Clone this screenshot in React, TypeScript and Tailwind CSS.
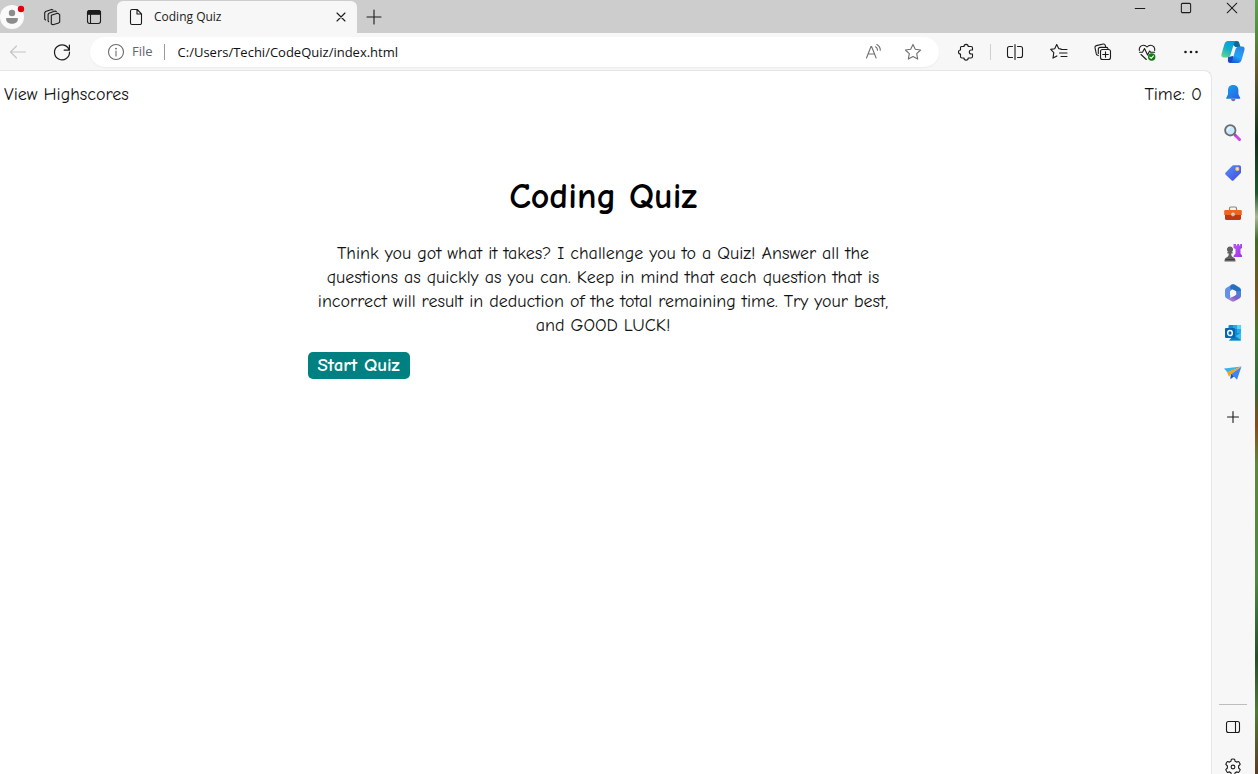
import { useState, type ReactNode } from "react";

type IconProps = { children: ReactNode; size?: number; className?: string };

function Line({ children, size = 20, className = "" }: IconProps) {
  return (
    <svg
      width={size}
      height={size}
      viewBox="0 0 20 20"
      fill="none"
      stroke="currentColor"
      strokeWidth="1.1"
      strokeLinecap="round"
      strokeLinejoin="round"
      className={className}
      aria-hidden="true"
    >
      {children}
    </svg>
  );
}

function ToolButton({ label, children, className = "w-11" }: { label: string; children: ReactNode; className?: string }) {
  return (
    <button type="button" aria-label={label} className={`flex h-full shrink-0 items-center justify-center ${className}`}>
      {children}
    </button>
  );
}

function TitleBar() {
  return (
    <header className="flex h-[33px] shrink-0 bg-[#cdcdcd]">
      <button type="button" aria-label="Profile" className="w-[32px] shrink-0">
        <svg width="25" height="33" viewBox="0 0 25 33" aria-hidden="true">
          <circle cx="12" cy="17" r="12" fill="#fafafa" />
          <circle cx="12" cy="13" r="3.2" fill="#8c8c8c" />
          <path d="M6.200 18h11.600v1.500c0 2.800-2.600 4.200-5.800 4.200s-5.800-1.400-5.800-4.200z" fill="#8c8c8c" />
          <circle cx="21" cy="9" r="3.200" fill="#e3000f" />
        </svg>
      </button>
      <ToolButton label="Workspaces" className="w-10">
        <Line>
          <path d="M9.300 8.200l6.200-2 .9.400 1.300 1.100v7.300l-1 .9-5.700 1.900-1.700-.9V8.800z" />
          <path d="M6.600 14.700l-.5-.8V7.300l.8-1 6.300-2.200 1.200.6M3.600 13l-.9-.8V5.600l.8-1L9.700 2.400l1.300.6" />
        </Line>
      </ToolButton>
      <ToolButton label="Tab actions" className="w-11">
        <Line>
          <rect x="3.500" y="3.500" width="13" height="13" rx="2.200" />
          <path d="M3.500 5.700a2.200 2.200 0 0 1 2.200-2.200h8.600a2.200 2.200 0 0 1 2.200 2.200v1.600h-13z" fill="currentColor" />
          <path d="M6.500 7v9.500" />
        </Line>
      </ToolButton>
      <div className="mt-px ml-px flex w-60 shrink-0 items-center rounded-t-md bg-[#f7f7f7] pr-[6px] pl-[9px]">
        <Line>
          <path d="M6 2.500h5.200l4.300 4.300V16a1.500 1.500 0 0 1-1.500 1.500H6A1.500 1.500 0 0 1 4.500 16V4A1.500 1.500 0 0 1 6 2.500zM11 2.700V7h4.300" />
        </Line>
        <span className="flex-1 pl-2 text-xs text-[#1b1b1b]">Coding Quiz</span>
        <button type="button" aria-label="Close tab" className="flex size-5 items-center justify-center">
          <Line>
            <path d="M6 6l8 8M14 6l-8 8" />
          </Line>
        </button>
      </div>
      <ToolButton label="New tab" className="w-[34px]">
        <Line>
          <path d="M10 3v14M3 10h14" />
        </Line>
      </ToolButton>
      <div className="ml-auto flex h-4">
        <ToolButton label="Minimize" className="w-[46px]">
          <Line size={16}>
            <path d="M4 10.500h12" strokeWidth="1.300" />
          </Line>
        </ToolButton>
        <ToolButton label="Maximize" className="w-[46px]">
          <Line size={16}>
            <rect x="4.200" y="4.200" width="11.600" height="11.600" rx="1.500" strokeWidth="1.300" />
          </Line>
        </ToolButton>
        <ToolButton label="Close window" className="w-[46px]">
          <Line size={16}>
            <path d="M4 4l12 12M16 4L4 16" strokeWidth="1.300" />
          </Line>
        </ToolButton>
      </div>
    </header>
  );
}

function Toolbar() {
  return (
    <nav className="flex h-[38px] shrink-0 items-center pr-[2px]">
      <ToolButton label="Back" className="w-9">
        <Line className="text-[#c4c4c4]">
          <path d="M17.500 10H2.500M8.500 4L2.500 10l6 6" />
        </Line>
      </ToolButton>
      <ToolButton label="Refresh" className="w-[52px]">
        <Line>
          <path d="M17.200 8.200A7.500 7.500 0 1 0 17.500 10M17.400 3v5.200h-5.200" strokeWidth="1.200" />
        </Line>
      </ToolButton>
      <form
        className="mr-[5px] ml-[2px] flex h-[30px] flex-1 items-center rounded-full bg-white px-4 shadow-xs"
        onSubmit={(e) => e.preventDefault()}
      >
        <button type="button" className="flex items-center gap-[6px] text-[13px] text-[#5f6670]">
          <Line className="text-[#6b6b6b]">
            <circle cx="10" cy="10" r="7.500" />
            <path d="M10 9v5" />
            <circle cx="10" cy="6.600" r=".4" fill="currentColor" />
          </Line>
          File
        </button>
        <span className="mr-[13px] ml-[11px] h-4 w-px bg-[#9a9a9a]" />
        <input
          type="text"
          aria-label="Address"
          defaultValue="C:/Users/Techi/CodeQuiz/index.html"
          className="min-w-0 flex-1 bg-transparent pt-px text-[13px] text-[#111] outline-none"
        />
        <button type="button" aria-label="Read aloud" className="mr-5 text-[#707070]">
          <Line>
            <path d="M3.500 16L8 4.500h.6l4.500 11.500M5.200 12h6.200M12.500 4.800c1.300.7 2 1.900 2 3.500M13.800 2.500c2.200 1.200 3.500 3.200 3.500 5.800" />
          </Line>
        </button>
        <button type="button" aria-label="Add to favorites" className="text-[#707070]">
          <Line>
            <path d="M10 2.400l2.300 4.900 5.300.7-3.900 3.700 1 5.400L10 14.500l-4.700 2.600 1-5.400L2.400 8l5.300-.7z" />
          </Line>
        </button>
      </form>
      <ToolButton label="Extensions">
        <Line>
          <path d="M5.500 4.500H8a2.100 2.100 0 0 1 4.200 0h2.800a1.500 1.500 0 0 1 1.500 1.500v2h-1.200a2 2 0 0 0 0 4h1.200v2.500a1.500 1.500 0 0 1-1.500 1.500h-2.800a2.100 2.100 0 0 1-4.200 0H6a1.500 1.500 0 0 1-1.500-1.500V12a2 2 0 0 1 0-4V5.500a1 1 0 0 1 1-1z" />
        </Line>
      </ToolButton>
      <span className="mx-[2px] h-4 w-px bg-[#cfcfcf]" />
      <ToolButton label="Split screen">
        <Line>
          <path d="M10 2.500v15M7.500 4.500h-3a2 2 0 0 0-2 2v7a2 2 0 0 0 2 2h3M12.500 4.500h3a2 2 0 0 1 2 2v7a2 2 0 0 1-2 2h-3" />
        </Line>
      </ToolButton>
      <ToolButton label="Favorites">
        <Line>
          <path d="M12.200 7L9.700 6.600 7.700 2.500 5.700 6.700l-4 .7 3.100 3.200-.8 5.500 3.900-2.200M12 7.500h6M10.500 11h7.500M12 14.500h6" />
        </Line>
      </ToolButton>
      <ToolButton label="Collections">
        <Line>
          <rect x="7.500" y="7.500" width="10" height="10" rx="2" />
          <path d="M12.500 9.700v5.600M9.700 12.500h5.600M5.300 13.600l-1.100-.5a2 2 0 0 1-.9-1.200L2 5.700a1.800 1.800 0 0 1 1.300-2.100l7-1.600a1.800 1.800 0 0 1 2 1.300l.4 1.900M5.300 11.500V7.400a2 2 0 0 1 2-2h5.900a2 2 0 0 1 1.800 1" />
        </Line>
      </ToolButton>
      <ToolButton label="Browser essentials">
        <Line>
          <path d="M2.300 8.500C1.800 5.500 4 3.200 6.500 3.200c1.500 0 2.600.7 3.500 1.800.9-1.100 2-1.800 3.500-1.800 2.500 0 4.700 2.300 4.200 5.300M4 12.500l5.300 5M2.500 10.200h3l2-3.700 3.100 6.500 2-4 1 1.200h4" />
          <circle cx="14.700" cy="15" r="3.700" fill="#107c10" stroke="none" />
          <path d="M12.900 15.100l1.300 1.200 2.300-2.500" stroke="white" />
        </Line>
      </ToolButton>
      <ToolButton label="Settings and more">
        <Line>
          <g fill="currentColor" stroke="none">
            <circle cx="4.500" cy="10" r="1.300" />
            <circle cx="10" cy="10" r="1.300" />
            <circle cx="15.500" cy="10" r="1.300" />
          </g>
        </Line>
      </ToolButton>
      <ToolButton label="Copilot" className="w-10">
        <svg width="24" height="24" viewBox="0 0 24 24" aria-hidden="true">
          <defs>
            <linearGradient id="cpA" x1=".7" y1="0" x2=".2" y2="1">
              <stop offset="0" stopColor="#0799dc" />
              <stop offset=".5" stopColor="#16afc9" />
              <stop offset="1" stopColor="#64d68b" />
            </linearGradient>
            <linearGradient id="cpB" x1=".7" y1="0" x2=".2" y2="1">
              <stop offset="0" stopColor="#2e83e8" />
              <stop offset=".55" stopColor="#21a2fa" />
              <stop offset="1" stopColor="#1557dc" />
            </linearGradient>
          </defs>
          <path d="M11 1h5c1.300 0 2 .8 2.300 2l1.200 4h-5.200L11 4z" fill="#136791" />
          <path d="M7 17l5-1 2 4-1 3H9c-1.200 0-1.800-.8-2.100-2z" fill="#1748c7" />
          <path d="M7 1h8.500c-1.700.2-2.400 1.800-2.900 3.500L9.800 14c-.6 2.100-1.500 3.600-3.700 3.600H2.800C.7 17.600 0 15.800.6 13.700l2.700-9.300C4 2.300 5 1 7 1z" fill="url(#cpA)" />
          <path d="M17 23H8.800c1.700-.2 2.300-1.700 2.800-3.500l2.700-9.500c.6-2.100 1.500-3.500 3.700-3.500h3.200c2.100 0 2.800 1.700 2.200 3.800l-2.700 9.300c-.7 2.200-1.700 3.400-3.700 3.400z" fill="url(#cpB)" />
        </svg>
      </ToolButton>
    </nav>
  );
}

function Art({ children }: { children: ReactNode }) {
  return (
    <svg width="18" height="18" viewBox="0 0 18 18" aria-hidden="true">
      {children}
    </svg>
  );
}

const sidebarApps: { label: string; art: ReactNode }[] = [
  {
    label: "Notifications",
    art: (
      <>
        <path d="M7 15h4.500c-.3 1.500-1 2.200-2.200 2.200S7.300 16.500 7 15z" fill="#777" />
        <path d="M9.200 1C5.800 1 4 3.200 4 6.500v3.700L2.200 14v.7h14V14l-1.800-3.800V6.500C14.400 3.200 12.500 1 9.200 1z" fill="url(#sbBlue)" />
      </>
    ),
  },
  {
    label: "Search",
    art: (
      <>
        <path d="M11 11l4.500 4.500" stroke="#cb45ee" strokeWidth="3" strokeLinecap="round" />
        <path d="M10 10l2 2" stroke="#8c5ba0" strokeWidth="2" />
        <circle cx="6.300" cy="6.300" r="5.200" fill="#c8e8ff" stroke="#6b6b6b" strokeWidth="1.800" />
        <path d="M3.500 6.500a3 3 0 0 1 3-3" stroke="white" fill="none" />
      </>
    ),
  },
  {
    label: "Shopping",
    art: (
      <>
        <path d="M9.300 1.300h6c1 0 1.700.7 1.700 1.700v5.200c0 .6-.2 1-.6 1.400l-6.700 6.700c-.7.700-1.500.7-2.200 0l-5.800-5.600c-.7-.7-.7-1.400 0-2.100L8 1.900c.4-.4.800-.6 1.300-.6z" fill="url(#sbTag)" />
        <circle cx="13.300" cy="4.900" r="1.500" fill="#eee" stroke="#ffc533" strokeWidth="1.200" />
      </>
    ),
  },
  {
    label: "Tools",
    art: (
      <>
        <path d="M5.500 6V4.500C5.500 3.700 6 3 6.800 3h4.400c.8 0 1.300.7 1.300 1.500V6" fill="none" stroke="#858585" strokeWidth="1.200" />
        <path d="M1.500 6h15c.8 0 1.300.5 1.300 1.300V11H.2V7.300C.2 6.500.7 6 1.500 6z" fill="#ed6423" />
        <path d="M1 11h16v3.600c0 .8-.5 1.300-1.300 1.300H2.300c-.8 0-1.300-.5-1.300-1.300z" fill="#bd3a10" />
        <circle cx="9" cy="10.400" r="1.800" fill="#d6d6d6" />
        <path d="M9 10.400v2" stroke="#aaa" />
      </>
    ),
  },
  {
    label: "Games",
    art: (
      <>
        <path d="M9.500 0H12v1.500h1.200V0h1.900v1.500h1.100V0H18v4l-1.500 1v4.500l1.500 2V13H9.700v-1.500l1.800-2V5l-2-1z" fill="url(#sbPurple)" />
        <path d="M6 2.500a3 3 0 0 0-1.700 5.500H3.400v1.400h1.400c0 2-.6 3.200-2.500 4.200C1 14.200.5 15.700.5 17.500h11c0-1.800-.5-3.300-1.800-3.900-1.900-1-2.500-2.200-2.500-4.200h1.400V8h-.9A3 3 0 0 0 6 2.500z" fill="#626262" />
        <path d="M1.500 15.500h9" stroke="#3f3f3f" />
      </>
    ),
  },
  {
    label: "Microsoft 365",
    art: (
      <>
        <path d="M7.800.6L2.600 3.700C1.500 4.400 1 5.300 1 6.500v5c0 1.500.8 2.500 2 3.100 1.700.9 3.300.2 3.300-1.700V7.300l2.200-1.600V.4z" fill="#668fe6" />
        <path d="M7.800.6c.9-.5 1.900-.5 2.800 0l4.800 2.800c1.100.7 1.600 1.700 1.600 3v5.300l-5-1.200V7.200L6.200 4.500C6.200 2.700 6.600 1.300 7.800.6z" fill="#276fc0" />
        <path d="M17 7v4.700c0 1.200-.6 2.200-1.600 2.800l-4.900 2.800c-1 .6-2 .6-3 0l-5-3c2 .7 3.300 0 5-1l4.500-2.600V7.500z" fill="url(#sbLilac)" />
        <path d="M8.500 5.500l3.700 2v3.200l-3.400 2-2.700-1.900V7.200z" fill="#f7f7f7" />
      </>
    ),
  },
  {
    label: "Outlook",
    art: (
      <>
        <rect x="4.500" y="1" width="12.500" height="13" rx="1" fill="#1688d0" />
        <path d="M9 1h4v4H9z" fill="#28a8ea" />
        <path d="M13 1h3c.6 0 1 .4 1 1v3h-4z" fill="#50d9ff" />
        <path d="M13 5h4v4h-4z" fill="#28a8ea" />
        <path d="M5 16.500h11c.6 0 1-.4 1-1V8.500l-6 4z" fill="#38bff1" />
        <path d="M10 11l7 5.300c-.3.200-.6.200-1 .2H5z" fill="#127bc1" />
        <rect x="1" y="4" width="10" height="10" rx="1" fill="#0864b5" />
        <ellipse cx="6" cy="9" rx="2.300" ry="2.600" fill="none" stroke="white" strokeWidth="1.500" />
      </>
    ),
  },
  {
    label: "Drop",
    art: (
      <>
        <path d="M17.500 2.500L13 15.700 9.800 12.500 6.500 15 7 10z" fill="#3f86f5" />
        <path d="M17.500 2.500L0 4.500l3.500 4z" fill="#35b4ee" />
        <path d="M17.500 2.500L3 8l2 4.700L7.300 10z" fill="#f4a51c" />
        <path d="M7 10l-.5 5 3.300-2.500z" fill="#1854b7" />
      </>
    ),
  },
];

function Sidebar() {
  return (
    <aside className="flex w-[43px] shrink-0 flex-col items-center overflow-hidden pt-[3px] pr-px">
      <svg width="0" height="0" className="absolute" aria-hidden="true">
        <defs>
          <linearGradient id="sbBlue" x1="0" y1="0" x2="1" y2="1">
            <stop stopColor="#18a2e8" />
            <stop offset="1" stopColor="#285ee8" />
          </linearGradient>
          <linearGradient id="sbTag" x1="0" y1="0" x2="1" y2="1">
            <stop stopColor="#5592ff" />
            <stop offset="1" stopColor="#4347dc" />
          </linearGradient>
          <linearGradient id="sbPurple" x1="0" y1="0" x2="1" y2="1">
            <stop stopColor="#c155f5" />
            <stop offset="1" stopColor="#9a35e2" />
          </linearGradient>
          <linearGradient id="sbLilac" x1="0" y1="1" x2="1" y2="0">
            <stop stopColor="#c79aec" />
            <stop offset=".5" stopColor="#805fc5" />
            <stop offset="1" stopColor="#2c90e8" />
          </linearGradient>
        </defs>
      </svg>
      {sidebarApps.map((app) => (
        <button key={app.label} type="button" aria-label={app.label} className="flex h-10 w-full shrink-0 items-center justify-center">
          <Art>{app.art}</Art>
        </button>
      ))}
      <button type="button" aria-label="Customize" className="flex h-12 w-full shrink-0 items-center justify-center">
        <Line>
          <path d="M10 4.500v11M4.500 10h11" />
        </Line>
      </button>
      <div className="mt-auto -mb-[13px] flex w-full shrink-0 flex-col items-center">
        <hr className="mb-[2px] w-7 border-[#bdbdbd]" />
        <button type="button" aria-label="Hide sidebar" className="flex h-10 w-full items-center justify-center">
          <Line>
            <rect x="3.500" y="4.500" width="13" height="11" rx="2" />
            <path d="M12.500 4.500v11" />
          </Line>
        </button>
        <button type="button" aria-label="Settings" className="flex h-10 w-full items-center justify-center">
          <Line>
            <path d="M8.400 2.200a8 8 0 0 1 3.200 0l.5 2.100 1.400.8 2.100-.6a8 8 0 0 1 1.600 2.800L15.600 9v2l1.600 1.700a8 8 0 0 1-1.600 2.800l-2.100-.6-1.400.8-.5 2.100a8 8 0 0 1-3.200 0l-.5-2.100-1.400-.8-2.100.6a8 8 0 0 1-1.600-2.800L4.400 11V9L2.800 7.300a8 8 0 0 1 1.600-2.800l2.100.6 1.400-.8z" />
            <circle cx="10" cy="10" r="1.900" />
          </Line>
        </button>
      </div>
    </aside>
  );
}

function QuizPage() {
  const [time, setTime] = useState(0);
  return (
    <main className="flex-1 overflow-auto rounded-tr-lg border-t border-r border-[#e5e5e5] bg-white pr-[5px] font-['Comic_Neue','Lato',sans-serif] text-lg leading-6 text-[#111]">
      <div className="flex justify-between px-1 pt-3 pb-[10px]">
        <a href="#highscores">View Highscores</a>
        <p>Time: {time}</p>
      </div>
      <section className="mx-auto mt-14 w-1/2">
        <h1 className="text-center text-4xl leading-[48px] font-bold text-black">Coding Quiz</h1>
        <p className="mt-[21px] px-2 text-center">
          Think you got what it takes? I challenge you to a Quiz! Answer all the questions as quickly as you can. Keep in
          mind that each question that is incorrect will result in deduction of the total remaining time. Try your best,
          and GOOD LUCK!
        </p>
        <button
          type="button"
          onClick={() => setTime(75)}
          className="mt-[14px] ml-[6px] h-[27px] rounded-[5px] bg-[#008080] px-[10px] text-[19px] leading-[27px] font-bold text-white"
        >
          Start Quiz
        </button>
      </section>
    </main>
  );
}

export default function App() {
  return (
    <div className="flex h-screen overflow-hidden bg-[#f7f7f7] font-['Segoe_UI','Open_Sans',sans-serif] text-[#1b1b1b]">
      <div className="flex min-w-0 flex-1 flex-col">
        <TitleBar />
        <Toolbar />
        <div className="-mt-px flex min-h-0 flex-1">
          <QuizPage />
          <Sidebar />
        </div>
      </div>
      <div className="w-[3px] shrink-0 bg-[linear-gradient(#5fa04a_0%,#4f8a3c_5%,#6b5a2c_9%,#2f4a20_14%,#12301a_18%,#1d5a2e_25%,#a9b990_28%,#3f6b2a_31%,#7a5420_38%,#3f7a2c_43%,#2f6b38_50%,#8a4a18_55%,#5a8a3c_60%,#4a8a40_75%,#24502a_85%,#4f7a38_92%,#5a3a20_100%)]" />
    </div>
  );
}
